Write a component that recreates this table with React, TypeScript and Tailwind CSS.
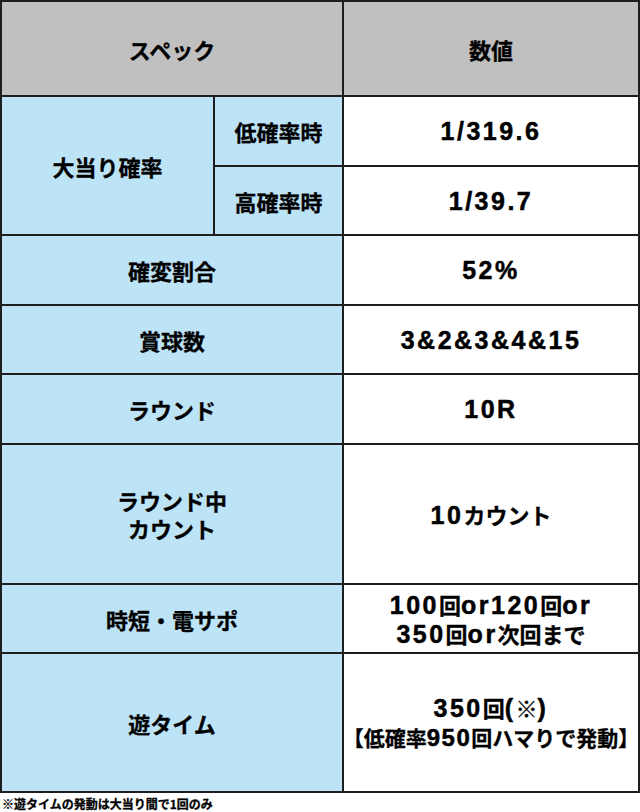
import React from 'react';

const Num: React.FC<{ children: React.ReactNode; small?: boolean }> = ({ children, small }) => (
  <span
    className={
      small
        ? "font-['Liberation_Sans',sans-serif] text-[24px] tracking-[1.5px] [-webkit-text-stroke:0.5px_black]"
        : "font-['Liberation_Sans',sans-serif] text-[25px] tracking-[2.5px] [-webkit-text-stroke:0.5px_black]"
    }
  >
    {children}
  </span>
);

const cell = 'flex items-center justify-center text-center';
const blue = 'bg-[#bde3f7]';
const white = 'bg-white';

export default function App() {
  return (
    <div className="w-[640px] bg-white font-['Noto_Sans_CJK_JP',sans-serif] font-bold text-black [-webkit-text-stroke:0.3px_black]">
      <div className="grid grid-cols-[211px_127px_294px] grid-rows-[93px_68px_67px_68px_67px_68px_138px_67px_137px] gap-[2px] bg-[#1e1e1e] p-[2px] text-[22px] leading-[28px]">
        <div className={`${cell} col-span-2 bg-[#c0c0c0]`}>スペック</div>
        <div className={`${cell} bg-[#c0c0c0]`}>数値</div>

        <div className={`${cell} ${blue} row-span-2`}>大当り確率</div>
        <div className={`${cell} ${blue}`}>低確率時</div>
        <div className={`${cell} ${white}`}>
          <Num>1/319.6</Num>
        </div>
        <div className={`${cell} ${blue}`}>高確率時</div>
        <div className={`${cell} ${white}`}>
          <Num>1/39.7</Num>
        </div>

        <div className={`${cell} ${blue} col-span-2`}>確変割合</div>
        <div className={`${cell} ${white}`}>
          <Num>52%</Num>
        </div>

        <div className={`${cell} ${blue} col-span-2`}>賞球数</div>
        <div className={`${cell} ${white}`}>
          <Num>3&amp;2&amp;3&amp;4&amp;15</Num>
        </div>

        <div className={`${cell} ${blue} col-span-2`}>ラウンド</div>
        <div className={`${cell} ${white}`}>
          <Num>10R</Num>
        </div>

        <div className={`${cell} ${blue} col-span-2`}>
          <span>
            ラウンド中
            <br />
            カウント
          </span>
        </div>
        <div className={`${cell} ${white}`}>
          <span>
            <Num>10</Num>カウント
          </span>
        </div>

        <div className={`${cell} ${blue} col-span-2`}>時短・電サポ</div>
        <div className={`${cell} ${white}`}>
          <span>
            <Num>100</Num>回<Num>or120</Num>回<Num>or</Num>
            <br />
            <Num>350</Num>回<Num>or</Num>次回まで
          </span>
        </div>

        <div className={`${cell} ${blue} col-span-2`}>遊タイム</div>
        <div className={`${cell} ${white}`}>
          <span>
            <Num>350</Num>回<Num>(</Num>※<Num>)</Num>
            <br />
            <span className="whitespace-nowrap text-[21px]">
              <span className="-ml-[6px]">【</span>低確率<Num small>950</Num>回ハマりで発動<span className="-mr-[6px]">】</span>
            </span>
          </span>
        </div>
      </div>
      <p className="px-[2px] pt-[3px] text-[12px] leading-[16px]">※遊タイムの発動は大当り間で1回のみ</p>
    </div>
  );
}
